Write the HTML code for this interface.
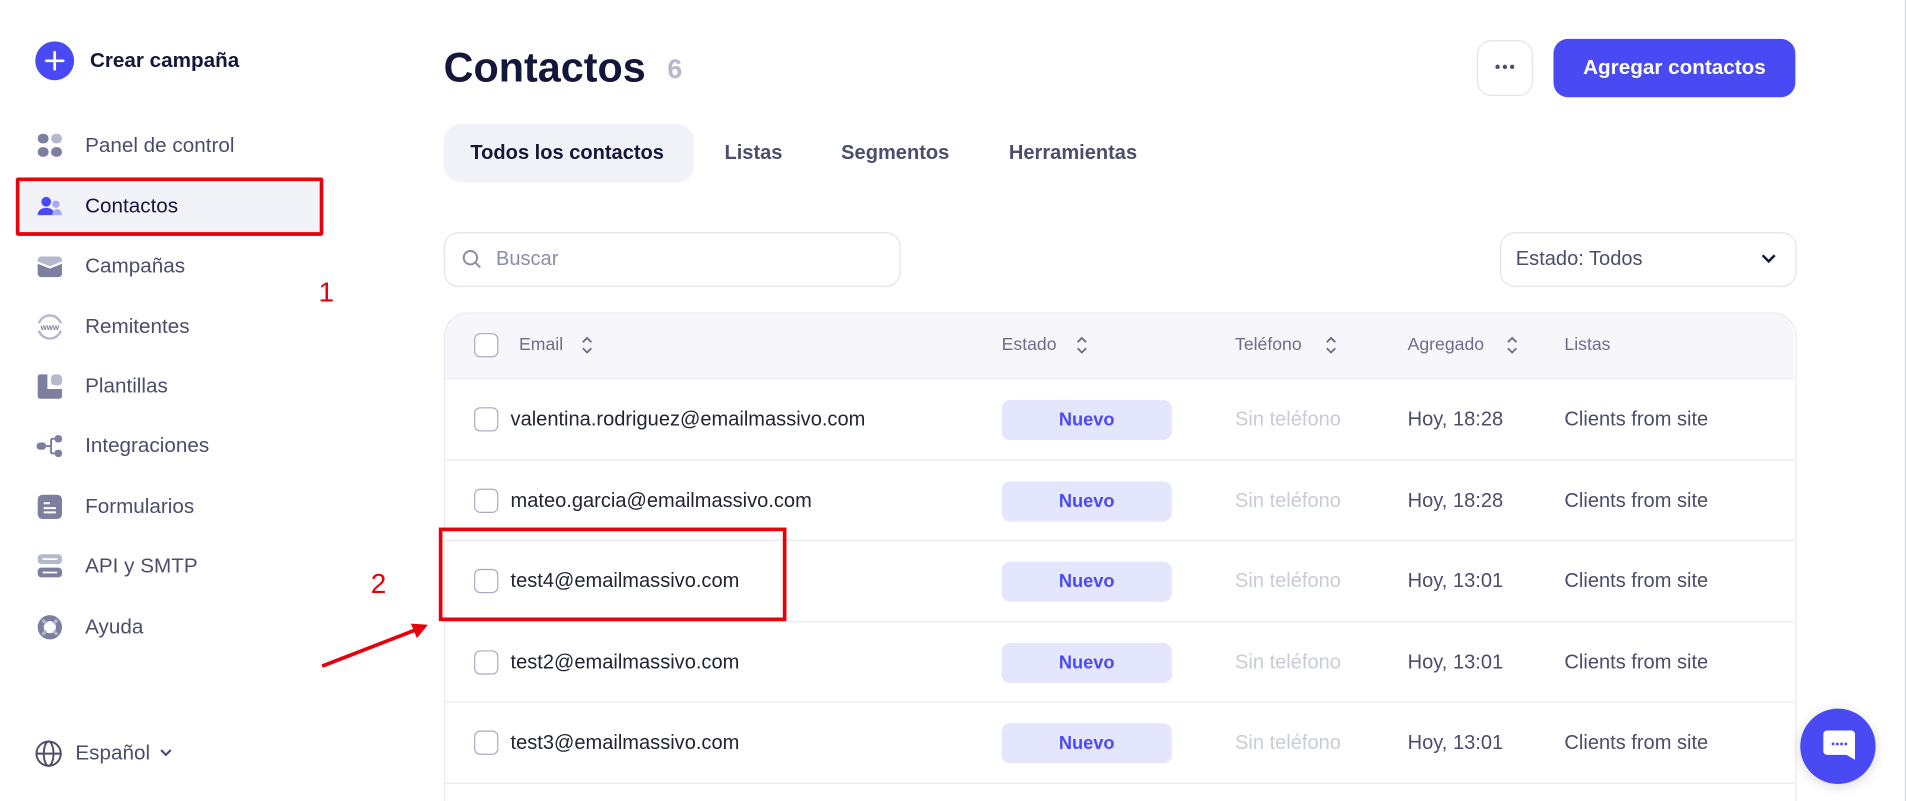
<!DOCTYPE html>
<html><head><meta charset="utf-8">
<style>
html,body{margin:0;padding:0;width:1906px;height:801px;overflow:hidden;background:#fff;}
#s{position:absolute;left:0;top:0;width:1568px;height:659px;overflow:hidden;transform:scale(1.21556);transform-origin:0 0;font-family:"Liberation Sans",sans-serif;}
.a{position:absolute;white-space:nowrap;}
.nav{position:absolute;left:70px;font-size:17px;color:#4a4d6b;line-height:20px;}
.ic{position:absolute;left:30px;width:22px;height:22px;}
.tab{position:absolute;top:116px;font-size:16.5px;color:#4a4d6b;font-weight:bold;line-height:20px;}
.hd{position:absolute;top:276px;font-size:14.5px;color:#6b6e8a;line-height:16px;}
.cb{position:absolute;left:390px;width:18px;height:18px;border:1.5px solid #a9acc0;border-radius:5px;background:#fff;}
.row{position:absolute;left:366px;width:1110px;height:66px;border-top:1px solid #e8e9f0;}
.em{position:absolute;left:54px;top:23px;font-size:16.5px;color:#222433;line-height:20px;}
.bd{position:absolute;left:458px;top:17px;width:140px;height:33px;background:#e4e6fd;border-radius:7px;color:#4a4af4;font-weight:bold;font-size:15px;text-align:center;line-height:33px;}
.ph{position:absolute;left:650px;top:23px;font-size:16.5px;color:#c9cbd6;line-height:20px;}
.dt{position:absolute;left:792px;top:23px;font-size:16.5px;color:#4a4d6b;line-height:20px;}
.ls{position:absolute;left:921px;top:23px;font-size:16.5px;color:#4a4d6b;line-height:20px;}
.row .cb{left:24px;top:23px;}
.arr{position:absolute;width:10px;height:16px;}
</style></head><body><div id="s">
<div class="a" style="left:29px;top:34px;width:32px;height:32px;border-radius:50%;background:#4a4af4;"></div>
<svg class="a" style="left:29px;top:34px" width="32" height="32"><path d="M16 9v14M9 16h14" stroke="#fff" stroke-width="2.2" stroke-linecap="round"/></svg>
<div class="a" style="left:74px;top:40px;font-size:17px;color:#14163a;font-weight:bold;line-height:20px;">Crear campaña</div>

<div class="a" style="left:14px;top:147px;width:251px;height:46px;background:#f1f3f9;"></div>
<div class="a" style="left:13px;top:146px;width:247px;height:42px;border:3px solid #e8000b;border-radius:2px;"></div>

<svg class="ic" style="top:109px" viewBox="0 0 22 22"><rect x="1" y="1" width="9" height="8" rx="4" fill="#7c7fa0"/><rect x="12" y="1" width="9" height="8" rx="4" fill="#b6b8cc"/><rect x="1" y="12" width="9" height="8" rx="4" fill="#7c7fa0"/><rect x="12" y="12" width="9" height="8" rx="4" fill="#7c7fa0"/></svg>
<div class="nav" style="top:110px">Panel de control</div>
<svg class="ic" style="top:159px" viewBox="0 0 22 22"><circle cx="8" cy="7" r="4" fill="#4a4af4"/><path d="M1 18c0-4 3-6 7-6s7 2 7 6z" fill="#4a4af4"/><circle cx="16" cy="9" r="3" fill="#a5a8f8"/><path d="M13 18c0-3 2-5 4-5s4 2 4 5z" fill="#a5a8f8"/></svg>
<div class="nav" style="top:160px;color:#14163a">Contactos</div>
<svg class="ic" style="top:208px" viewBox="0 0 22 22"><path d="M1 6a3 3 0 013-3h14a3 3 0 013 3v1l-10 4L1 7z" fill="#b6b8cc"/><path d="M1 9l10 4 10-4v8a3 3 0 01-3 3H4a3 3 0 01-3-3z" fill="#7c7fa0"/></svg>
<div class="nav" style="top:209px">Campañas</div>
<svg class="ic" style="top:258px" viewBox="0 0 22 22"><circle cx="11" cy="11" r="9.5" fill="none" stroke="#b6b8cc" stroke-width="2"/><rect x="0" y="8" width="22" height="6" fill="#fff"/><text x="11" y="13.5" font-size="6.5" font-weight="bold" fill="#7c7fa0" text-anchor="middle" font-family="Liberation Sans">www</text></svg>
<div class="nav" style="top:259px">Remitentes</div>
<svg class="ic" style="top:307px" viewBox="0 0 22 22"><path d="M1 3a2 2 0 012-2h6v12h12v6a2 2 0 01-2 2H3a2 2 0 01-2-2z" fill="#7c7fa0"/><rect x="12" y="1" width="9" height="9" rx="3" fill="#b6b8cc"/></svg>
<div class="nav" style="top:308px">Plantillas</div>
<svg class="ic" style="top:356px" viewBox="0 0 22 22"><rect x="0" y="8" width="8" height="6" rx="3" fill="#7c7fa0"/><path d="M8 11h4M12 5v12M12 5h4M12 17h4" stroke="#7c7fa0" stroke-width="1.6" fill="none"/><rect x="15" y="2" width="6" height="6" rx="2.5" fill="#7c7fa0"/><rect x="15" y="14" width="6" height="6" rx="2.5" fill="#7c7fa0"/></svg>
<div class="nav" style="top:357px">Integraciones</div>
<svg class="ic" style="top:406px" viewBox="0 0 22 22"><rect x="1" y="1" width="20" height="20" rx="4" fill="#7c7fa0"/><path d="M6 8h5M6 12h10M6 15.5h10" stroke="#fff" stroke-width="1.6"/></svg>
<div class="nav" style="top:407px">Formularios</div>
<svg class="ic" style="top:455px" viewBox="0 0 22 22"><rect x="1" y="1" width="20" height="8" rx="3" fill="#b6b8cc"/><rect x="1" y="12" width="20" height="8" rx="3" fill="#7c7fa0"/><path d="M5 5h12M5 16h12" stroke="#fff" stroke-width="1.4"/></svg>
<div class="nav" style="top:456px">API y SMTP</div>
<svg class="ic" style="top:505px" viewBox="0 0 22 22"><circle cx="11" cy="11" r="7.5" fill="none" stroke="#7c7fa0" stroke-width="5"/><path d="M5 5l3 3M17 5l-3 3M5 17l3-3M17 17l-3-3" stroke="#b6b8cc" stroke-width="2.5"/></svg>
<div class="nav" style="top:506px">Ayuda</div>

<svg class="a" style="left:29px;top:609px" width="22" height="22" viewBox="0 0 22 22"><g fill="none" stroke="#4a4d6b" stroke-width="1.6"><circle cx="11" cy="11" r="10"/><ellipse cx="11" cy="11" rx="4" ry="10"/><path d="M1 11h20"/></g></svg>
<div class="a" style="left:62px;top:610px;font-size:17px;color:#4a4d6b;line-height:20px;">Español</div>
<svg class="a" style="left:131px;top:615px" width="11" height="8"><path d="M1.5 2l4 4 4-4" stroke="#4a4d6b" stroke-width="1.8" fill="none"/></svg>

<div class="a" style="left:262px;top:226px;font-size:23px;color:#e8000b;line-height:28px;">1</div>
<div class="a" style="left:305px;top:466px;font-size:23px;color:#e8000b;line-height:28px;">2</div>
<svg class="a" style="left:260px;top:505px" width="100" height="50"><path d="M5 43L85 12" stroke="#e8000b" stroke-width="3"/><path d="M92 9l-14-1 5 12z" fill="#e8000b"/></svg>

<div class="a" style="left:365px;top:36px;font-size:34px;font-weight:bold;color:#14163a;line-height:40px;">Contactos</div>
<div class="a" style="left:549px;top:44px;font-size:22px;font-weight:bold;color:#b6b8cc;line-height:26px;">6</div>
<div class="a" style="left:1215px;top:33px;width:44px;height:44px;border:1px solid #e2e4ec;border-radius:12px;"></div>
<svg class="a" style="left:1228px;top:52px" width="20" height="6"><circle cx="4" cy="3" r="1.8" fill="#4a4d6b"/><circle cx="10" cy="3" r="1.8" fill="#4a4d6b"/><circle cx="16" cy="3" r="1.8" fill="#4a4d6b"/></svg>
<div class="a" style="left:1278px;top:32px;width:199px;height:48px;background:#4a4af4;border-radius:12px;color:#fff;font-weight:bold;font-size:17px;text-align:center;line-height:48px;">Agregar contactos</div>

<div class="a" style="left:365px;top:102px;width:206px;height:48px;background:#f1f3f9;border-radius:14px;"></div>
<div class="tab" style="left:387px;color:#14163a">Todos los contactos</div>
<div class="tab" style="left:596px">Listas</div>
<div class="tab" style="left:692px">Segmentos</div>
<div class="tab" style="left:830px">Herramientas</div>

<div class="a" style="left:365px;top:191px;width:374px;height:43px;border:1px solid #e2e4ec;border-radius:12px;"></div>
<svg class="a" style="left:379px;top:204px" width="18" height="18"><circle cx="8" cy="8" r="5.5" fill="none" stroke="#8a8da6" stroke-width="1.6"/><path d="M12 12l4 4" stroke="#8a8da6" stroke-width="1.6"/></svg>
<div class="a" style="left:408px;top:203px;font-size:16.5px;color:#8a8da6;line-height:20px;">Buscar</div>

<div class="a" style="left:1234px;top:191px;width:242px;height:43px;border:1px solid #e2e4ec;border-radius:12px;"></div>
<div class="a" style="left:1247px;top:203px;font-size:16.5px;color:#4a4d6b;line-height:20px;">Estado: Todos</div>
<svg class="a" style="left:1448px;top:208px" width="14" height="10"><path d="M2 2l5 5 5-5" stroke="#14163a" stroke-width="2" fill="none"/></svg>

<div class="a" style="left:365px;top:257px;width:1111px;height:402px;border:1px solid #e8e9f0;border-bottom:none;border-radius:20px 20px 0 0;background:#fff;"></div>
<div class="a" style="left:366px;top:258px;width:1110px;height:53px;background:#f7f7fb;border-radius:19px 19px 0 0;"></div>
<div class="cb" style="top:274px"></div>
<div class="hd" style="left:427px">Email</div>
<div class="hd" style="left:824px">Estado</div>
<div class="hd" style="left:1016px">Teléfono</div>
<div class="hd" style="left:1158px">Agregado</div>
<div class="hd" style="left:1287px">Listas</div>
<svg class="arr" style="left:478px;top:276px" viewBox="0 0 10 16"><path d="M1.5 5.5L5 2l3.5 3.5M1.5 10.5L5 14l3.5-3.5" stroke="#6b6e8a" stroke-width="1.5" fill="none"/></svg>
<svg class="arr" style="left:885px;top:276px" viewBox="0 0 10 16"><path d="M1.5 5.5L5 2l3.5 3.5M1.5 10.5L5 14l3.5-3.5" stroke="#6b6e8a" stroke-width="1.5" fill="none"/></svg>
<svg class="arr" style="left:1090px;top:276px" viewBox="0 0 10 16"><path d="M1.5 5.5L5 2l3.5 3.5M1.5 10.5L5 14l3.5-3.5" stroke="#6b6e8a" stroke-width="1.5" fill="none"/></svg>
<svg class="arr" style="left:1239px;top:276px" viewBox="0 0 10 16"><path d="M1.5 5.5L5 2l3.5 3.5M1.5 10.5L5 14l3.5-3.5" stroke="#6b6e8a" stroke-width="1.5" fill="none"/></svg>

<div class="row" style="top:311px"><div class="cb"></div><div class="em">valentina.rodriguez@emailmassivo.com</div><div class="bd">Nuevo</div><div class="ph">Sin teléfono</div><div class="dt">Hoy, 18:28</div><div class="ls">Clients from site</div></div>
<div class="row" style="top:378px"><div class="cb"></div><div class="em">mateo.garcia@emailmassivo.com</div><div class="bd">Nuevo</div><div class="ph">Sin teléfono</div><div class="dt">Hoy, 18:28</div><div class="ls">Clients from site</div></div>
<div class="row" style="top:444px"><div class="cb"></div><div class="em">test4@emailmassivo.com</div><div class="bd">Nuevo</div><div class="ph">Sin teléfono</div><div class="dt">Hoy, 13:01</div><div class="ls">Clients from site</div></div>
<div class="row" style="top:511px"><div class="cb"></div><div class="em">test2@emailmassivo.com</div><div class="bd">Nuevo</div><div class="ph">Sin teléfono</div><div class="dt">Hoy, 13:01</div><div class="ls">Clients from site</div></div>
<div class="row" style="top:577px"><div class="cb"></div><div class="em">test3@emailmassivo.com</div><div class="bd">Nuevo</div><div class="ph">Sin teléfono</div><div class="dt">Hoy, 13:01</div><div class="ls">Clients from site</div></div>
<div class="row" style="top:644px;height:14px"></div>

<div class="a" style="left:361px;top:434px;width:280px;height:71px;border:3px solid #e8000b;"></div>

<div class="a" style="left:1481px;top:583px;width:62px;height:62px;border-radius:50%;background:#4a4af4;box-shadow:0 2px 10px rgba(0,0,0,.15);"></div>
<svg class="a" style="left:1499px;top:600px" width="28" height="30" viewBox="0 0 28 30"><path d="M4 1h20a3 3 0 013 3v21l-7-4H4a3 3 0 01-3-3V4a3 3 0 013-3z" fill="#fff"/><g fill="#4a4af4"><circle cx="9" cy="12" r="1.2"/><circle cx="12.5" cy="12" r="1.2"/><circle cx="16" cy="12" r="1.2"/><circle cx="19.5" cy="12" r="1.2"/></g></svg>
<div class="a" style="left:1567px;top:0;width:1px;height:659px;background:#d5d7e0;"></div>
</div></body></html>
